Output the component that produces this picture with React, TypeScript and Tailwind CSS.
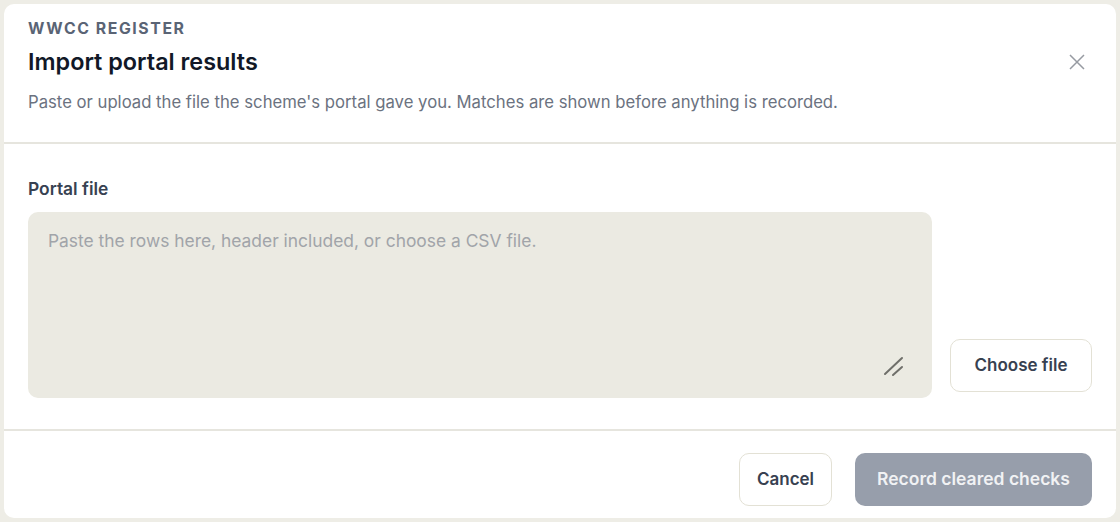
export default function App() {
  return (
    <div
      className="min-h-[522px] w-full bg-[#eeede6] p-[4px]"
      style={{ fontFamily: 'Inter, "Noto Sans", sans-serif' }}
    >
      <div className="flex h-[514px] flex-col overflow-hidden rounded-[10px] bg-white">
        {/* Header */}
        <div className="relative border-b-2 border-[#e6e5de] px-6 pt-[14px] pb-[28px]">
          <p className="text-[15.8px] font-bold uppercase leading-[22px] tracking-[0.1em] text-[#5a6475]">
            WWCC register
          </p>
          <h2 className="mt-[7px] text-[23.4px] font-semibold leading-[30px] text-[#111827]">
            Import portal results
          </h2>
          <p className="mt-[13px] text-[16.7px] leading-[24px] text-[#6b7280]">
            Paste or upload the file the scheme&apos;s portal gave you. Matches are shown before anything is recorded.
          </p>
          <button
            type="button"
            aria-label="Close"
            className="absolute top-[50px] right-[31px] text-[#979ba2]"
          >
            <svg width="16" height="16" viewBox="0 0 16 16" fill="none" stroke="currentColor" strokeWidth="1.5">
              <path d="M1 1l14 14M15 1L1 15" />
            </svg>
          </button>
        </div>

        {/* Body */}
        <div className="border-b-2 border-[#e6e5de] px-6 pt-[33px] pb-[31px]">
          <label className="block text-[17.4px] font-semibold leading-[24px] text-[#374151]">
            Portal file
          </label>
          <div className="mt-[11px] flex items-end gap-[18px]">
            <div className="relative h-[186px] flex-1 rounded-[10px] bg-[#ebeae2] p-[20px]">
              <textarea
                className="h-full w-full resize-none bg-transparent text-[17.4px] leading-[18px] text-[#374151] outline-none placeholder:text-[#a1a4a9]"
                placeholder="Paste the rows here, header included, or choose a CSV file."
              />
              <svg
                className="pointer-events-none absolute right-[27px] bottom-[21px]"
                width="22"
                height="22"
                viewBox="0 0 22 22"
                fill="none"
                stroke="#6f6f6a"
                strokeWidth="2"
                strokeLinecap="round"
              >
                <path d="M2 19L19 3M10 20L19 12" />
              </svg>
            </div>
            <button
              type="button"
              className="mb-[6px] h-[53px] w-[142px] rounded-[10px] border border-[#e3e1d5] bg-white text-[17px] font-semibold text-[#374151]"
            >
              Choose file
            </button>
          </div>
        </div>

        {/* Footer */}
        <div className="flex justify-end gap-[23px] px-6 pt-[22px]">
          <button
            type="button"
            className="h-[53px] w-[93px] rounded-[10px] border border-[#e3e1d5] bg-white text-[17px] font-semibold text-[#374151]"
          >
            Cancel
          </button>
          <button
            type="button"
            disabled
            className="h-[53px] w-[237px] rounded-[10px] bg-[#979eab] text-[17.5px] font-semibold text-[#f1f2f4]"
          >
            Record cleared checks
          </button>
        </div>
      </div>
    </div>
  );
}
